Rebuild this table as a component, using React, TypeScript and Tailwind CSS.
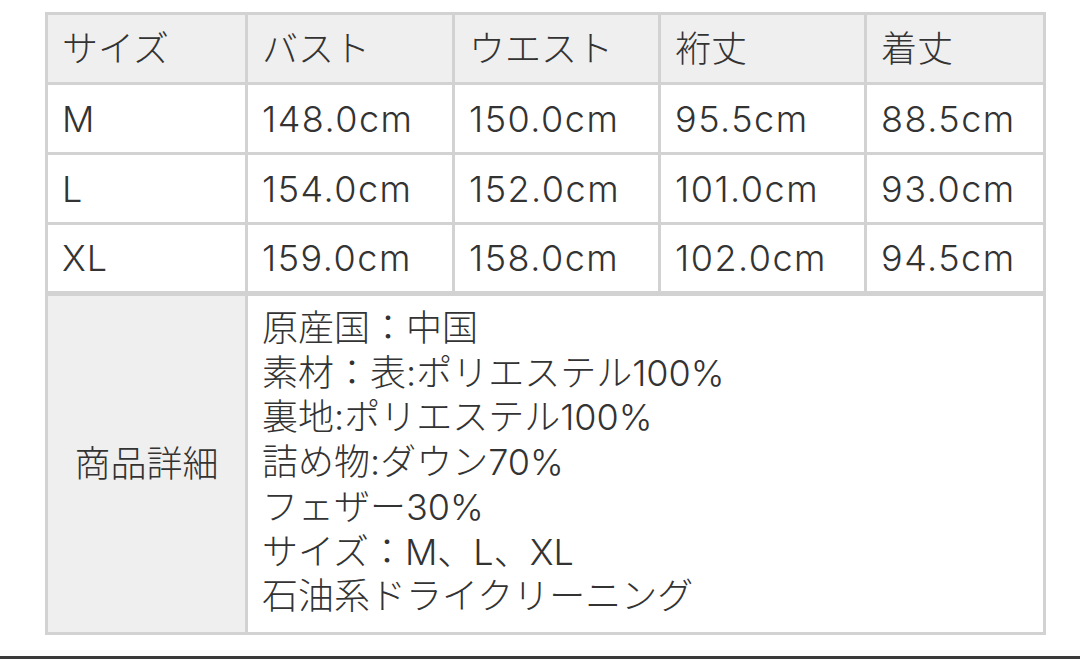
import React from "react";

const rows = [
  ["M", "148.0cm", "150.0cm", "95.5cm", "88.5cm"],
  ["L", "154.0cm", "152.0cm", "101.0cm", "93.0cm"],
  ["XL", "159.0cm", "158.0cm", "102.0cm", "94.5cm"],
];

const details = [
  "原産国：中国",
  "素材：表:ポリエステル100%",
  "裏地:ポリエステル100%",
  "詰め物:ダウン70%",
  "フェザー30%",
  "サイズ：M、L、XL",
  "石油系ドライクリーニング",
];

export default function App() {
  const cell = "border-[3px] border-[#d2d2d2] px-[14px] text-left align-middle font-light";
  return (
    <div
      className="h-[659px] w-[1080px] bg-white flex flex-col text-[#333333]"
      style={{ fontFamily: 'Inter, "Noto Sans CJK JP", sans-serif' }}
    >
      <div className="pt-[12px] pl-[45px]">
        <table className="table-fixed border-collapse w-[998px] text-[36px]">
          <colgroup>
            <col className="w-[200px]" />
            <col className="w-[207px]" />
            <col className="w-[206px]" />
            <col className="w-[206px]" />
            <col className="w-[179px]" />
          </colgroup>
          <thead>
            <tr className="h-[70px] bg-[#efefef]">
              {["サイズ", "バスト", "ウエスト", "裄丈", "着丈"].map((h) => (
                <th key={h} className={cell}>
                  {h}
                </th>
              ))}
            </tr>
          </thead>
          <tbody>
            {rows.map((r) => (
              <tr key={r[0]} className="h-[70px]">
                {r.map((c, i) => (
                  <td key={i} className={cell + (i > 0 ? " tracking-[1.5px]" : " tracking-[1px]")}>
                    {c}
                  </td>
                ))}
              </tr>
            ))}
            <tr className="h-[340px]">
              <td className="border-[3px] border-t-[5px] border-[#d2d2d2] bg-[#efefef] text-center align-middle font-light">
                商品詳細
              </td>
              <td colSpan={4} className="border-[3px] border-t-[5px] border-[#d2d2d2] px-[14px] py-[10px] align-top leading-[44.7px] font-light">
                {details.map((d) => (
                  <div key={d}>{d}</div>
                ))}
              </td>
            </tr>
          </tbody>
        </table>
      </div>
      <div className="flex-1" />
      <div className="h-[3px] bg-[#3a3a3a]" />
    </div>
  );
}
